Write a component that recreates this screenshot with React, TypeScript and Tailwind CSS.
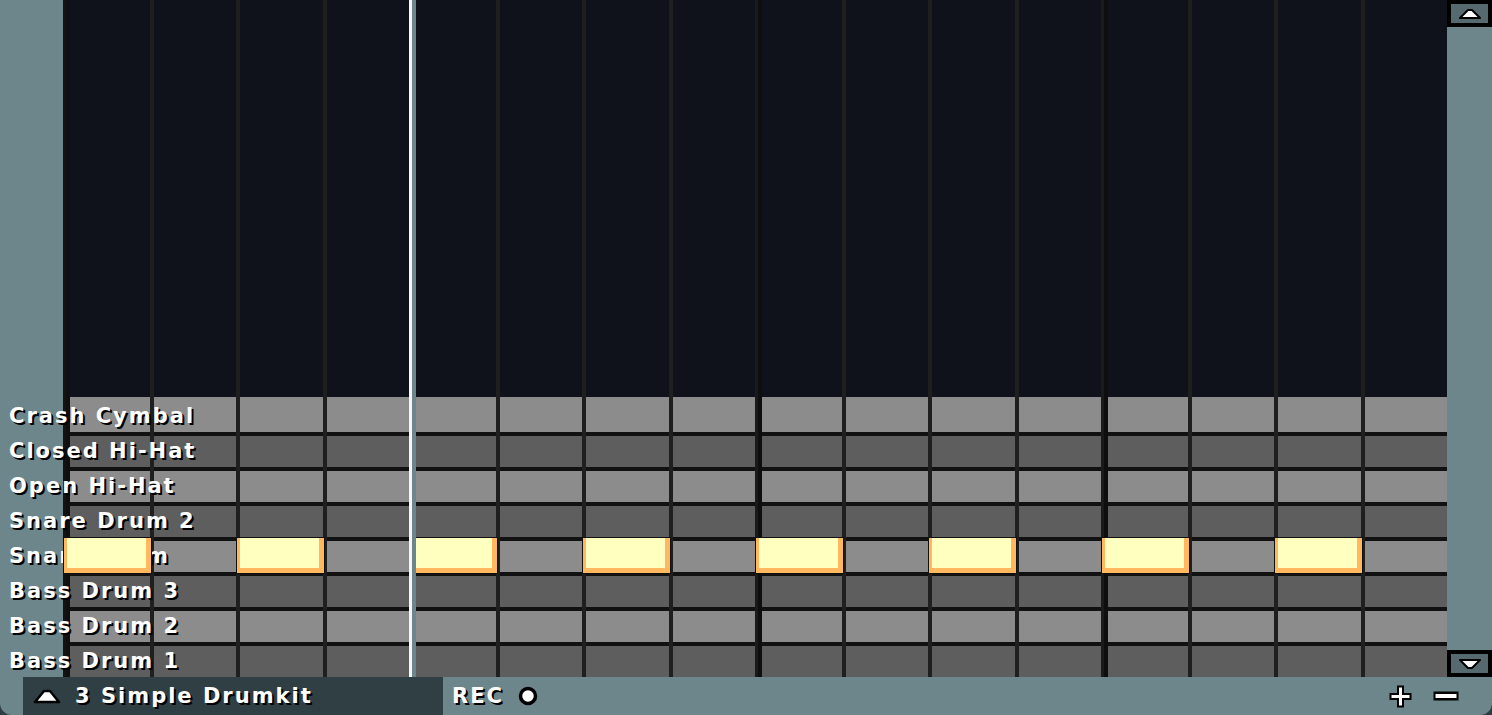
const LABELS = [
  "Crash Cymbal",
  "Closed Hi-Hat",
  "Open Hi-Hat",
  "Snare Drum 2",
  "Snare Drum",
  "Bass Drum 3",
  "Bass Drum 2",
  "Bass Drum 1",
];

const HIT_ROW = 4;
const PLAYHEAD_COL = 4;

const labelText =
  "font-['DejaVu_Sans',sans-serif] font-bold text-[21px] tracking-[2px] text-white leading-none whitespace-nowrap [text-shadow:2px_2px_0_#000]";

function ColumnLine({ index }: { index: number }) {
  if (index === 0) {
    return (
      <>
        <div className="w-[3px] shrink-0 bg-[#131313]" />
        <div className="w-[4px] shrink-0 bg-[#0f0f0f]" />
      </>
    );
  }
  if (index === PLAYHEAD_COL) {
    return (
      <div className="relative z-20 flex shrink-0">
        <div className="w-[3px] bg-[#f4f7f8]" />
        <div className="w-[4px] bg-[#6c868b]" />
      </div>
    );
  }
  if (index % 4 === 0) {
    return (
      <>
        <div className="w-[3px] shrink-0 bg-[#1a1a1a]" />
        <div className="w-[4px] shrink-0 bg-[#0e0e0e]" />
      </>
    );
  }
  return <div className="w-[4px] shrink-0 bg-[#1f1f1f]" />;
}

function Hit({ wide }: { wide: boolean }) {
  return (
    <div
      className={
        "absolute -top-[4px] z-10 h-[37px] w-[89px] border border-[#111] " +
        (wide ? "-left-[7px]" : "-left-[4px]")
      }
    >
      <div className="h-full border-l-[3px] border-r-[5px] border-b-[5px] border-[#ffb860] bg-[#ffffc0]" />
    </div>
  );
}

function Column({ index }: { index: number }) {
  const wide = index % 4 === 0;
  const hit = index % 2 === 0;
  return (
    <div className="flex min-w-0">
      <ColumnLine index={index} />
      <div className="flex min-w-0 flex-1 flex-col">
        <div className="h-[397px] bg-[#10121b]" />
        {LABELS.map((_, r) => (
          <div
            key={r}
            className={
              "relative h-[35px] " +
              (r === 0 ? "" : "border-t-4 border-[#111] ") +
              (r % 2 === 0 ? "bg-[#8c8c8c]" : "bg-[#5e5e5e]")
            }
          >
            {r === HIT_ROW && hit && <Hit wide={wide} />}
          </div>
        ))}
      </div>
    </div>
  );
}

function ScrollButton({ down }: { down?: boolean }) {
  return (
    <div className="flex h-[27px] items-center justify-center border-4 border-black bg-[#56696e]">
      <svg width="24" height="12" viewBox="0 0 24 12">
        <polygon
          points={down ? "2,2 22,2 14,10 10,10" : "2,10 10,2 14,2 22,10"}
          fill="#fff"
          stroke="#000"
          strokeWidth="2"
          strokeLinejoin="round"
        />
      </svg>
    </div>
  );
}

export default function App() {
  return (
    <div className="h-[715px] w-[1492px] bg-[#2e3d42]">
      <div className="flex h-full flex-col overflow-hidden rounded-b-[12px] bg-[#6c868b]">
        <div className="flex h-[677px]">
          <div className="relative flex w-[1447px]">
            <div className="w-[63px] shrink-0" />
            <div className="grid w-[1384px] grid-cols-16">
              {Array.from({ length: 16 }, (_, i) => (
                <Column key={i} index={i} />
              ))}
            </div>
            {/* row labels, drawn over the first cells */}
            <div className="pointer-events-none absolute left-[9px] top-[399px] z-[5] flex flex-col">
              {LABELS.map((l) => (
                <div key={l} className="flex h-[35px] items-center">
                  <span className={labelText}>{l}</span>
                </div>
              ))}
            </div>
          </div>
          <div className="flex w-[45px] flex-col justify-between">
            <ScrollButton />
            <ScrollButton down />
          </div>
        </div>

        {/* bottom bar */}
        <div className="flex h-[38px] items-center pl-[23px] pr-[33px]">
          <div className="flex h-full w-[420px] items-center bg-[#2f3f44] pl-[10px]">
            <svg width="28" height="17" viewBox="0 0 28 17">
              <polygon
                points="2,14 11,3 17,3 26,14"
                fill="#fff"
                stroke="#000"
                strokeWidth="2.5"
                strokeLinejoin="round"
              />
            </svg>
            <span className={labelText + " ml-[14px]"}>3 Simple Drumkit</span>
          </div>
          <span className={labelText + " ml-[9px]"}>REC</span>
          <svg className="ml-[14px]" width="20" height="20" viewBox="0 0 20 20">
            <circle cx="10" cy="10" r="7.5" fill="#fff" stroke="#000" strokeWidth="3.5" />
          </svg>
          <div className="ml-auto flex items-center gap-[20px]">
            <svg width="25" height="25" viewBox="0 0 25 25">
              <path
                d="M9 1.5h7v7.5h7.5v7h-7.5v7.5h-7v-7.5h-7.5v-7h7.5z"
                fill="#000"
              />
              <path d="M11 3.5h3v7.5h7.5v3h-7.5v7.5h-3v-7.5h-7.5v-3h7.5z" fill="#fff" />
            </svg>
            <svg width="26" height="10" viewBox="0 0 26 10">
              <rect x="0.5" y="0.5" width="25" height="9" fill="#000" />
              <rect x="2.5" y="3" width="21" height="4" fill="#fff" />
            </svg>
          </div>
        </div>
      </div>
    </div>
  );
}
